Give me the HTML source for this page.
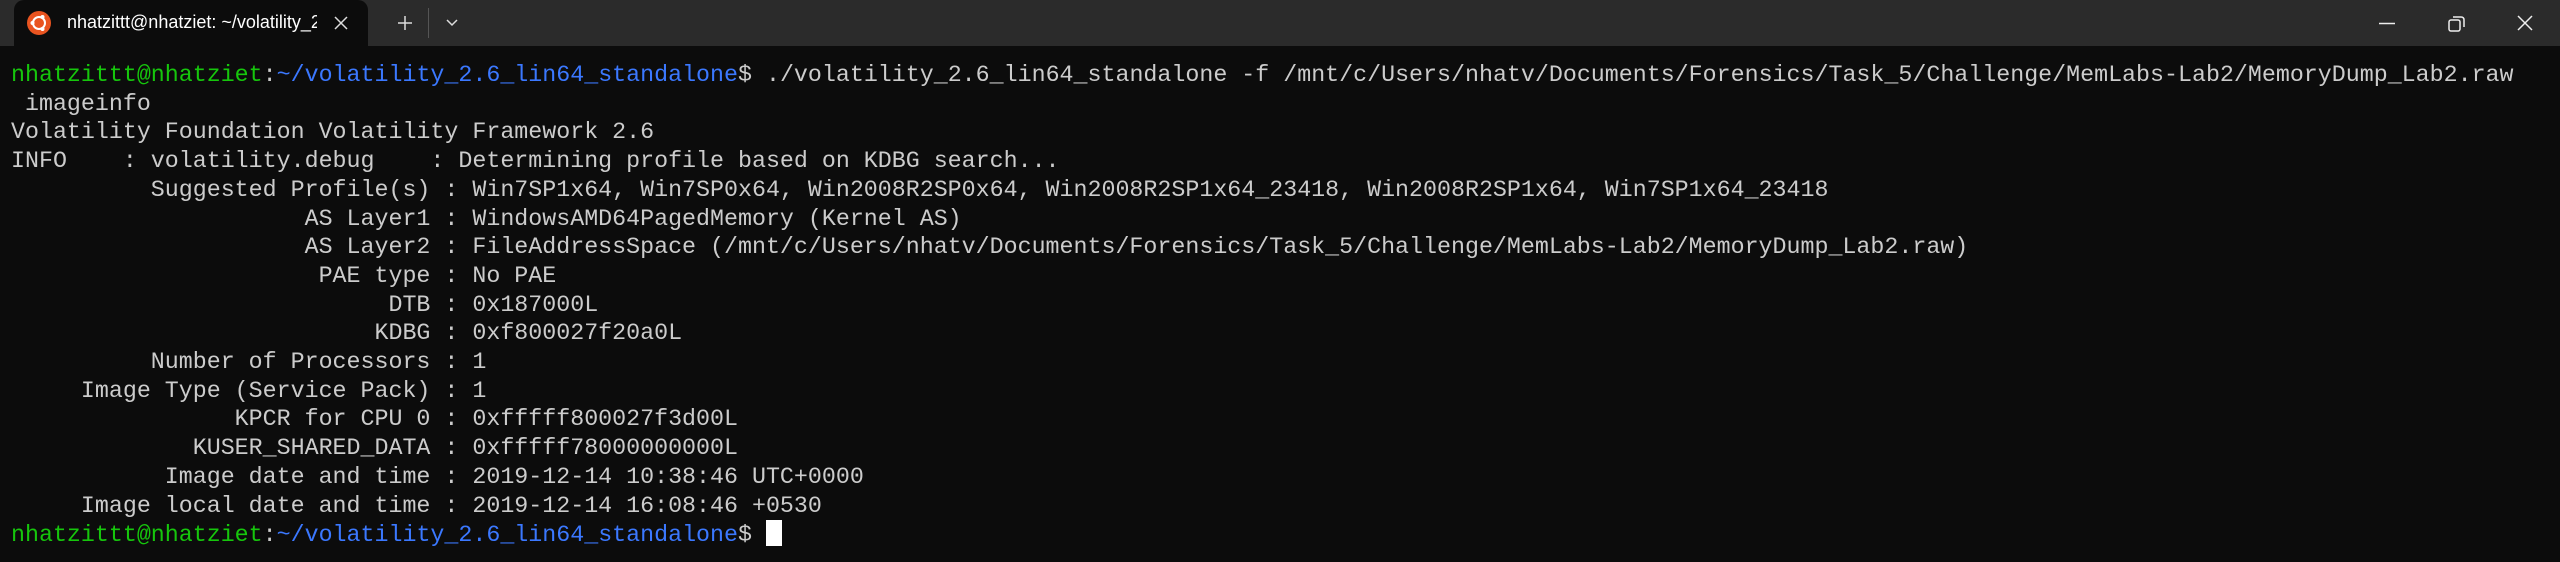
<!DOCTYPE html>
<html><head><meta charset="utf-8"><style>
html,body{margin:0;padding:0;background:#0c0c0c;width:2560px;height:562px;overflow:hidden}
.bar{position:absolute;left:0;top:0;width:2560px;height:46px;background:#2b2b2b}
.tab{position:absolute;left:14px;top:0;width:354px;height:46px;background:#0c0c0c;border-radius:10px 10px 0 0}
.ico{position:absolute;left:27px;top:11px;width:24px;height:24px;border-radius:50%;background:#e95420}
.title{position:absolute;left:67px;top:12px;font:18px "Liberation Sans",sans-serif;color:#fff;white-space:nowrap;width:250px;overflow:hidden}
.term{position:absolute;left:11px;top:61px;font-family:"Liberation Mono",monospace;font-size:23.3px;line-height:28.7px;color:#cccccc;white-space:pre;margin:0}
.g{color:#16c60c}.b{color:#3b78ff}
.cur{display:inline-block;width:16px;height:26px;background:#fff;vertical-align:-5px}
svg{position:absolute}
</style></head><body>
<div class="bar"></div>
<div class="tab"></div>
<div class="ico"><svg width="24" height="24" viewBox="0 0 24 24" style="left:0;top:0"><circle cx="12" cy="12" r="6" fill="none" stroke="#fff" stroke-width="2"/><circle cx="5.5" cy="12" r="2" fill="#fff"/><circle cx="15.5" cy="6" r="2" fill="#fff"/><circle cx="15.5" cy="18" r="2" fill="#fff"/></svg></div>
<div class="title">nhatzittt@nhatziet: ~/volatility_2.6</div>
<svg style="left:333px;top:15px" width="16" height="16"><path d="M2 2L14 14M14 2L2 14" stroke="#ddd" stroke-width="1.5"/></svg>
<svg style="left:397px;top:15px" width="16" height="16"><path d="M8 1V15M1 8H15" stroke="#ddd" stroke-width="1.5"/></svg>
<div style="position:absolute;left:428px;top:8px;width:1px;height:30px;background:#555"></div>
<svg style="left:446px;top:18px" width="12" height="10"><path d="M1 2L6 7L11 2" stroke="#ddd" stroke-width="1.5" fill="none"/></svg>
<svg style="left:2379px;top:22px" width="16" height="3"><path d="M0 1.5H16" stroke="#eee" stroke-width="1.5"/></svg>
<svg style="left:2448px;top:15px" width="18" height="18"><rect x="1" y="5" width="11" height="11" rx="2" fill="none" stroke="#eee" stroke-width="1.5"/><path d="M5 2H13Q16 2 16 5V12" fill="none" stroke="#eee" stroke-width="1.5"/></svg>
<svg style="left:2517px;top:15px" width="16" height="16"><path d="M1 1L15 15M15 1L1 15" stroke="#eee" stroke-width="1.5"/></svg>
<pre class="term"><span class="g">nhatzittt@nhatziet</span>:<span class="b">~/volatility_2.6_lin64_standalone</span>$ ./volatility_2.6_lin64_standalone -f /mnt/c/Users/nhatv/Documents/Forensics/Task_5/Challenge/MemLabs-Lab2/MemoryDump_Lab2.raw
 imageinfo
Volatility Foundation Volatility Framework 2.6
INFO    : volatility.debug    : Determining profile based on KDBG search...
          Suggested Profile(s) : Win7SP1x64, Win7SP0x64, Win2008R2SP0x64, Win2008R2SP1x64_23418, Win2008R2SP1x64, Win7SP1x64_23418
                     AS Layer1 : WindowsAMD64PagedMemory (Kernel AS)
                     AS Layer2 : FileAddressSpace (/mnt/c/Users/nhatv/Documents/Forensics/Task_5/Challenge/MemLabs-Lab2/MemoryDump_Lab2.raw)
                      PAE type : No PAE
                           DTB : 0x187000L
                          KDBG : 0xf800027f20a0L
          Number of Processors : 1
     Image Type (Service Pack) : 1
                KPCR for CPU 0 : 0xfffff800027f3d00L
             KUSER_SHARED_DATA : 0xfffff78000000000L
           Image date and time : 2019-12-14 10:38:46 UTC+0000
     Image local date and time : 2019-12-14 16:08:46 +0530
<span class="g">nhatzittt@nhatziet</span>:<span class="b">~/volatility_2.6_lin64_standalone</span>$ <span class="cur"></span></pre>
</body></html>
